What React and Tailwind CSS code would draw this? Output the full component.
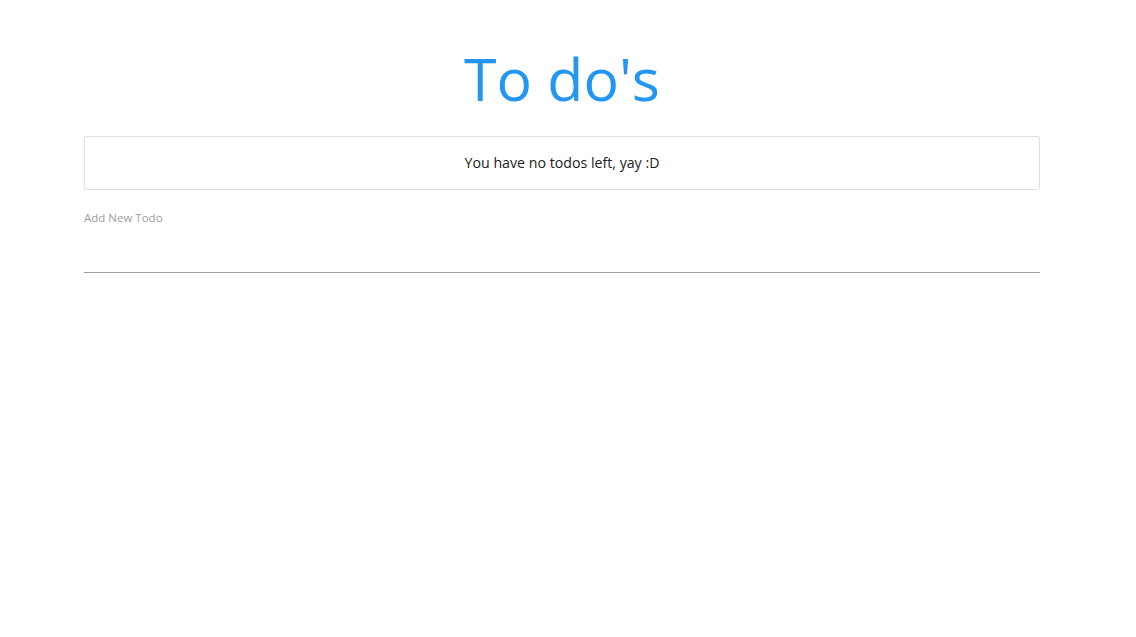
import React from 'react'

const App = () => {
  return (
    <div className="min-h-screen bg-white" style={{ fontFamily: '"Open Sans", "Noto Sans", sans-serif' }}>
      <div className="ml-[84px] w-[956px]">
        <h1 className="pt-[38px] text-center text-[59px] leading-[80px] font-normal text-[#2196f3]">To do's</h1>

        <div className="mt-[18px] h-[54px] flex items-center justify-center border border-[#e0e0e0] rounded-[2px] text-[14.2px] text-[#212121]">
          You have no todos left, yay :D
        </div>

        <div className="mt-[20px]">
          <label className="block text-[11.5px] leading-[16px] text-[#9e9e9e]">Add New Todo</label>
          <input
            type="text"
            className="mt-[37px] block w-full h-[10px] border-b border-[#9e9e9e] outline-none"
          />
        </div>
      </div>
    </div>
  )
}

export default App
